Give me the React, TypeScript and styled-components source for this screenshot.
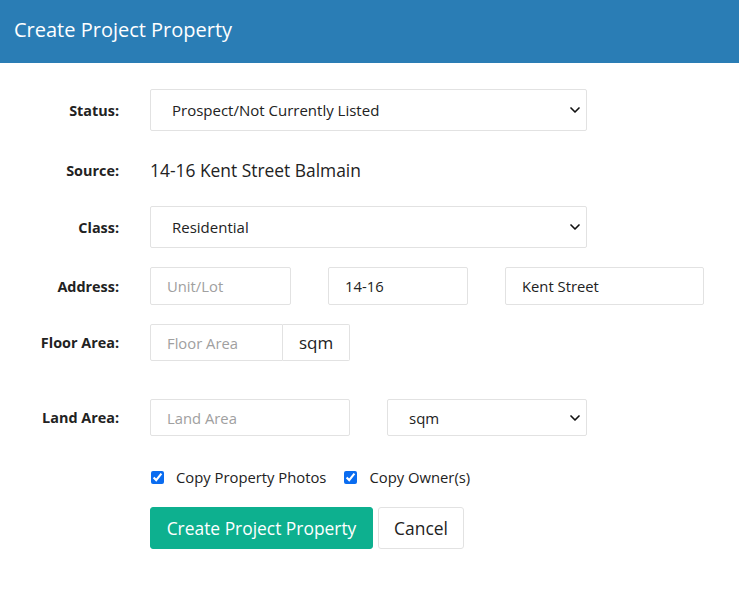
import React from "react";
import styled, { createGlobalStyle } from "styled-components";
import { ChevronDown } from "lucide-react";

const GlobalStyle = createGlobalStyle`
  body {
    margin: 0;
    background: #ffffff;
    font-family: "Open Sans", "Noto Sans", sans-serif;
    color: #222;
  }
`;

const Header = styled.div`
  height: 63px;
  background: #2a7db5;
  display: flex;
  align-items: center;
  padding-left: 14px;
  color: #ffffff;
  font-size: 20px;
  padding-bottom: 4px;
  box-sizing: border-box;
`;

const Form = styled.div`
  padding-top: 26px;
`;

const Row = styled.div<{ $top: number; $h: number }>`
  display: grid;
  grid-template-columns: 119px 1fr;
  column-gap: 31px;
  align-items: center;
  margin-top: ${(p) => p.$top}px;
  min-height: ${(p) => p.$h}px;
`;

const Label = styled.label`
  text-align: right;
  font-weight: 700;
  font-size: 14.4px;
  color: #222;
`;

const Fields = styled.div`
  display: flex;
  align-items: center;
  gap: 37px;
`;

const SelectWrap = styled.div<{ $w: number; $h: number }>`
  position: relative;
  width: ${(p) => p.$w}px;
  height: ${(p) => p.$h}px;

  svg {
    position: absolute;
    right: 4px;
    top: 50%;
    transform: translateY(-50%);
    pointer-events: none;
    color: #111;
  }
`;

const Select = styled.select`
  appearance: none;
  width: 100%;
  height: 100%;
  box-sizing: border-box;
  border: 1px solid #e2e2e2;
  border-radius: 2px;
  background: #fff;
  padding: 0 30px 0 21px;
  font-family: "Open Sans", sans-serif;
  font-size: 15px;
  color: #222;
  outline: none;
`;

const Input = styled.input<{ $w: number; $h?: number }>`
  width: ${(p) => p.$w}px;
  height: ${(p) => p.$h ?? 38}px;
  box-sizing: border-box;
  border: 1px solid #e2e2e2;
  border-radius: 2px;
  padding: 0 16px;
  font-family: "Open Sans", sans-serif;
  font-size: 14.8px;
  color: #222;
  outline: none;

  &::placeholder {
    color: #a0a0a0;
  }
`;

const Group = styled.div`
  display: flex;
  height: 37px;

  input {
    border-radius: 2px 0 0 2px;
  }
`;

const Addon = styled.span`
  width: 67px;
  box-sizing: border-box;
  border: 1px solid #e2e2e2;
  border-left: none;
  border-radius: 0 2px 2px 0;
  display: flex;
  align-items: center;
  justify-content: center;
  font-size: 17px;
  color: #222;
`;

const SourceText = styled.span`
  font-size: 17.4px;
  color: #222;
`;

const Checks = styled.div`
  display: flex;
  align-items: center;
  gap: 18px;
  padding-left: 1px;
`;

const CheckLabel = styled.label`
  display: flex;
  align-items: center;
  gap: 12px;
  font-size: 14.8px;
  color: #222;

  input {
    width: 13px;
    height: 13px;
    margin: 0;
    accent-color: #0a6cf0;
  }
`;

const Buttons = styled.div`
  display: flex;
  gap: 5px;
`;

const Button = styled.button<{ $primary?: boolean }>`
  height: 42px;
  padding: 0;
  border-radius: 3px;
  font-family: "Open Sans", sans-serif;
  font-size: 17.4px;
  cursor: pointer;
  border: 1px solid ${(p) => (p.$primary ? "#0db08f" : "#e2e2e2")};
  background: ${(p) => (p.$primary ? "#0db08f" : "#ffffff")};
  color: ${(p) => (p.$primary ? "#ffffff" : "#222")};
  width: ${(p) => (p.$primary ? "223px" : "86px")};
`;

export default function App() {
  return (
    <>
      <GlobalStyle />
      <Header>Create Project Property</Header>
      <Form>
        <Row $top={0} $h={42}>
          <Label>Status:</Label>
          <SelectWrap $w={437} $h={42}>
            <Select defaultValue="prospect">
              <option value="prospect">Prospect/Not Currently Listed</option>
            </Select>
            <ChevronDown size={16} strokeWidth={2.5} />
          </SelectWrap>
        </Row>
        <Row $top={18} $h={42}>
          <Label>Source:</Label>
          <SourceText>14-16 Kent Street Balmain</SourceText>
        </Row>
        <Row $top={15} $h={42}>
          <Label>Class:</Label>
          <SelectWrap $w={437} $h={42}>
            <Select defaultValue="res">
              <option value="res">Residential</option>
            </Select>
            <ChevronDown size={16} strokeWidth={2.5} />
          </SelectWrap>
        </Row>
        <Row $top={19} $h={38}>
          <Label>Address:</Label>
          <Fields>
            <Input $w={141} placeholder="Unit/Lot" />
            <Input $w={140} defaultValue="14-16" />
            <Input $w={199} defaultValue="Kent Street" />
          </Fields>
        </Row>
        <Row $top={19} $h={37}>
          <Label>Floor Area:</Label>
          <Group>
            <Input $w={133} $h={37} placeholder="Floor Area" />
            <Addon>sqm</Addon>
          </Group>
        </Row>
        <Row $top={38} $h={37}>
          <Label>Land Area:</Label>
          <Fields>
            <Input $w={200} $h={37} placeholder="Land Area" />
            <SelectWrap $w={200} $h={37}>
              <Select defaultValue="sqm">
                <option value="sqm">sqm</option>
              </Select>
              <ChevronDown size={16} strokeWidth={2.5} />
            </SelectWrap>
          </Fields>
        </Row>
        <Row $top={31} $h={20}>
          <span />
          <Checks>
            <CheckLabel>
              <input type="checkbox" defaultChecked />
              Copy Property Photos
            </CheckLabel>
            <CheckLabel>
              <input type="checkbox" defaultChecked />
              Copy Owner(s)
            </CheckLabel>
          </Checks>
        </Row>
        <Row $top={20} $h={42}>
          <span />
          <Buttons>
            <Button $primary>Create Project Property</Button>
            <Button>Cancel</Button>
          </Buttons>
        </Row>
      </Form>
    </>
  );
}
